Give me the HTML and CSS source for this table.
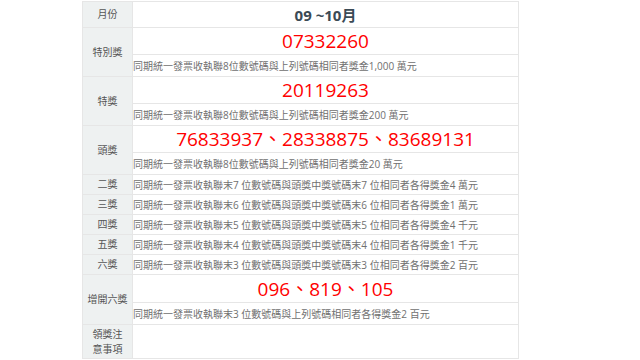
FILE: index.html
```html
<!DOCTYPE html>
<html lang="zh-Hant">
<head>
<meta charset="utf-8">
<title>統一發票中獎號碼</title>
<link rel="stylesheet" href="styles.css">
</head>
<body>
<div class="wrap">
<table class="prize">
  <colgroup>
    <col class="c-lbl">
    <col>
  </colgroup>
  <tr class="r-head">
    <th class="lbl">月份</th>
    <td class="month">09 ~10月</td>
  </tr>
  <tr class="r-num">
    <th class="lbl" rowspan="2">特別獎</th>
    <td class="num">07332260</td>
  </tr>
  <tr class="r-desc">
    <td class="desc">同期統一發票收執聯8位數號碼與上列號碼相同者獎金1,000 萬元</td>
  </tr>
  <tr class="r-num">
    <th class="lbl" rowspan="2">特獎</th>
    <td class="num">20119263</td>
  </tr>
  <tr class="r-desc">
    <td class="desc">同期統一發票收執聯8位數號碼與上列號碼相同者獎金200 萬元</td>
  </tr>
  <tr class="r-num">
    <th class="lbl" rowspan="2">頭獎</th>
    <td class="num">76833937、28338875、83689131</td>
  </tr>
  <tr class="r-desc">
    <td class="desc">同期統一發票收執聯8位數號碼與上列號碼相同者獎金20 萬元</td>
  </tr>
  <tr class="r-one">
    <th class="lbl">二獎</th>
    <td class="desc">同期統一發票收執聯末7 位數號碼與頭獎中獎號碼末7 位相同者各得獎金4 萬元</td>
  </tr>
  <tr class="r-one">
    <th class="lbl">三獎</th>
    <td class="desc">同期統一發票收執聯末6 位數號碼與頭獎中獎號碼末6 位相同者各得獎金1 萬元</td>
  </tr>
  <tr class="r-one">
    <th class="lbl">四獎</th>
    <td class="desc">同期統一發票收執聯末5 位數號碼與頭獎中獎號碼末5 位相同者各得獎金4 千元</td>
  </tr>
  <tr class="r-one">
    <th class="lbl">五獎</th>
    <td class="desc">同期統一發票收執聯末4 位數號碼與頭獎中獎號碼末4 位相同者各得獎金1 千元</td>
  </tr>
  <tr class="r-one">
    <th class="lbl">六獎</th>
    <td class="desc">同期統一發票收執聯末3 位數號碼與頭獎中獎號碼末3 位相同者各得獎金2 百元</td>
  </tr>
  <tr class="r-num r-num-tall">
    <th class="lbl" rowspan="2">增開六獎</th>
    <td class="num">096、819、105</td>
  </tr>
  <tr class="r-desc">
    <td class="desc">同期統一發票收執聯末3 位數號碼與上列號碼相同者各得獎金2 百元</td>
  </tr>
  <tr class="r-note">
    <th class="lbl">領獎注<br>意事項</th>
    <td class="desc"></td>
  </tr>
</table>
</div>
</body>
</html>
```

FILE: styles.css
```css
html, body {
  margin: 0;
  padding: 0;
  background: #ffffff;
}
.wrap {
  padding: 1px 0 0 82px;
}
.prize {
  border-collapse: collapse;
  width: 437px;
  font-family: "Open Sans", "Noto Sans CJK TC", sans-serif;
  table-layout: fixed;
}
.c-lbl {
  width: 50px;
}
.prize th, .prize td {
  border: 1px solid #e6e6e6;
  padding: 0;
}
.lbl {
  background: #eef1f1;
  color: #555;
  font-weight: normal;
  font-size: 10px;
  line-height: 15px;
  text-align: center;
  vertical-align: middle;
  white-space: nowrap;
}
.month {
  text-align: center;
  font-weight: bold;
  font-size: 15px;
  color: #3b4a55;
}
.num {
  text-align: center;
  color: #ff0000;
  font-size: 19px;
  line-height: 20px;
}
.desc {
  color: #707070;
  font-size: 10px;
  line-height: 14px;
  padding-left: 6px;
  white-space: nowrap;
}
.r-head { height: 26px; }
.r-num { height: 27px; }
.r-num-tall { height: 28px; }
.r-desc { height: 22px; }
.r-one { height: 20px; }
.r-note { height: 34px; }
```
